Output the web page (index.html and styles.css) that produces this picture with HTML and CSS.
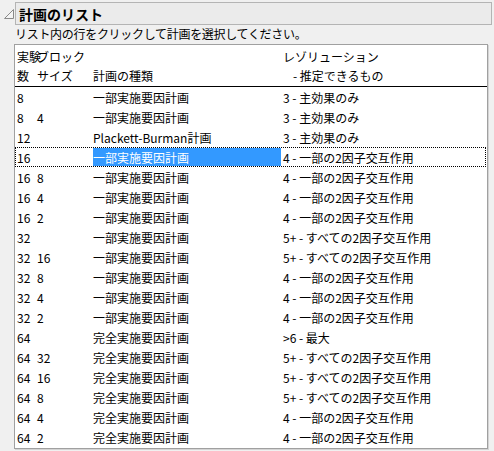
FILE: index.html
```html
<!DOCTYPE html>
<html lang="ja">
<head>
<meta charset="utf-8">
<link rel="stylesheet" href="styles.css">
</head>
<body>
<div class="panel">
  <div class="outline-head">
    <svg class="disclosure" width="10" height="10" viewBox="0 0 10 10"><path d="M0.5 9.5 L9.5 0.5 L9.5 9.5 Z" fill="#f4f4f4" stroke="#8a8a8a" stroke-width="1"/></svg>
    <div class="title-box"><span class="title">計画のリスト</span></div>
  </div>
  <div class="hint">リスト内の行をクリックして計画を選択してください。</div>
  <div class="list">
    <div class="list-head">
      <div class="hrow">
        <span class="c1 over">実験</span><span class="c2">ブロック</span><span class="c3"></span><span class="c4">レゾリューション</span>
      </div>
      <div class="hrow">
        <span class="c1">数</span><span class="c2">サイズ</span><span class="c3">計画の種類</span><span class="c4 indent">- 推定できるもの</span>
      </div>
    </div>
    <div class="row"><span class="c1">8</span><span class="c2"></span><span class="c3">一部実施要因計画</span><span class="c4">3 - 主効果のみ</span></div>
    <div class="row"><span class="c1">8</span><span class="c2">4</span><span class="c3">一部実施要因計画</span><span class="c4">3 - 主効果のみ</span></div>
    <div class="row"><span class="c1">12</span><span class="c2"></span><span class="c3">Plackett-Burman計画</span><span class="c4">3 - 主効果のみ</span></div>
    <div class="row selected"><span class="c1">16</span><span class="c2"></span><span class="c3 hl">一部実施要因計画</span><span class="c4">4 - 一部の2因子交互作用</span></div>
    <div class="row"><span class="c1">16</span><span class="c2">8</span><span class="c3">一部実施要因計画</span><span class="c4">4 - 一部の2因子交互作用</span></div>
    <div class="row"><span class="c1">16</span><span class="c2">4</span><span class="c3">一部実施要因計画</span><span class="c4">4 - 一部の2因子交互作用</span></div>
    <div class="row"><span class="c1">16</span><span class="c2">2</span><span class="c3">一部実施要因計画</span><span class="c4">4 - 一部の2因子交互作用</span></div>
    <div class="row"><span class="c1">32</span><span class="c2"></span><span class="c3">一部実施要因計画</span><span class="c4">5+ - すべての2因子交互作用</span></div>
    <div class="row"><span class="c1">32</span><span class="c2">16</span><span class="c3">一部実施要因計画</span><span class="c4">5+ - すべての2因子交互作用</span></div>
    <div class="row"><span class="c1">32</span><span class="c2">8</span><span class="c3">一部実施要因計画</span><span class="c4">4 - 一部の2因子交互作用</span></div>
    <div class="row"><span class="c1">32</span><span class="c2">4</span><span class="c3">一部実施要因計画</span><span class="c4">4 - 一部の2因子交互作用</span></div>
    <div class="row"><span class="c1">32</span><span class="c2">2</span><span class="c3">一部実施要因計画</span><span class="c4">4 - 一部の2因子交互作用</span></div>
    <div class="row"><span class="c1">64</span><span class="c2"></span><span class="c3">完全実施要因計画</span><span class="c4">&gt;6 - 最大</span></div>
    <div class="row"><span class="c1">64</span><span class="c2">32</span><span class="c3">完全実施要因計画</span><span class="c4">5+ - すべての2因子交互作用</span></div>
    <div class="row"><span class="c1">64</span><span class="c2">16</span><span class="c3">完全実施要因計画</span><span class="c4">5+ - すべての2因子交互作用</span></div>
    <div class="row"><span class="c1">64</span><span class="c2">8</span><span class="c3">完全実施要因計画</span><span class="c4">5+ - すべての2因子交互作用</span></div>
    <div class="row"><span class="c1">64</span><span class="c2">4</span><span class="c3">完全実施要因計画</span><span class="c4">4 - 一部の2因子交互作用</span></div>
    <div class="row"><span class="c1">64</span><span class="c2">2</span><span class="c3">完全実施要因計画</span><span class="c4">4 - 一部の2因子交互作用</span></div>
  </div>
</div>
</body>
</html>
```

FILE: styles.css
```css
html, body {
  margin: 0;
  padding: 0;
  background: #f0f0f0;
}
body {
  width: 494px;
  height: 451px;
  overflow: hidden;
  font-family: "Noto Sans CJK JP", "Noto Sans", sans-serif;
  font-size: 12px;
  color: #000;
}
.panel {
  padding-top: 2px;
}
.outline-head {
  display: flex;
  align-items: flex-start;
  padding-left: 4px;
}
.disclosure {
  margin-top: 7px;
  flex: none;
}
.title-box {
  margin-left: 1px;
  width: 472px;
  height: 21px;
  border: 1px solid #b4b4b4;
  background: #ebebeb;
  display: flex;
  align-items: center;
  padding-left: 3px;
  box-sizing: content-box;
}
.title {
  font-weight: bold;
  font-size: 14px;
  line-height: 18px;
}
.hint {
  margin-left: 15px;
  height: 19px;
  line-height: 17px;
  padding-top: 0;
  letter-spacing: -0.3px;
}
.list {
  margin-left: 14px;
  width: 472px;
  height: 403px;
  border: 1px solid #a0a0a0;
  background: #fff;
  box-shadow: 1px 1px 0 #d4d4d4;
  overflow: hidden;
}
.list-head {
  padding-top: 2px;
  padding-bottom: 1px;
  border-bottom: 1px solid #000;
}
.hrow {
  display: flex;
  height: 19px;
  align-items: center;
  padding-left: 2px;
  white-space: nowrap;
}
.row {
  display: flex;
  height: 20px;
  box-sizing: border-box;
  border: 1px dotted transparent;
  padding-left: 1px;
  white-space: nowrap;
  align-items: stretch;
  margin-right: 1px;
}
.row > span {
  display: flex;
  align-items: center;
}
.c1 { width: 20px; flex: none; overflow: visible; }
.c2 { width: 56px; flex: none; }
.c3 { width: 188px; margin-right: 2px; flex: none; }
.c4 { flex: 1; }
.over { position: relative; z-index: 1; }
.indent { padding-left: 10px; }
.selected {
  border-color: #000;
}
.hl {
  background: #3399ff;
  color: #fff;
  margin-top: 0;
  margin-bottom: 0;
}
```
